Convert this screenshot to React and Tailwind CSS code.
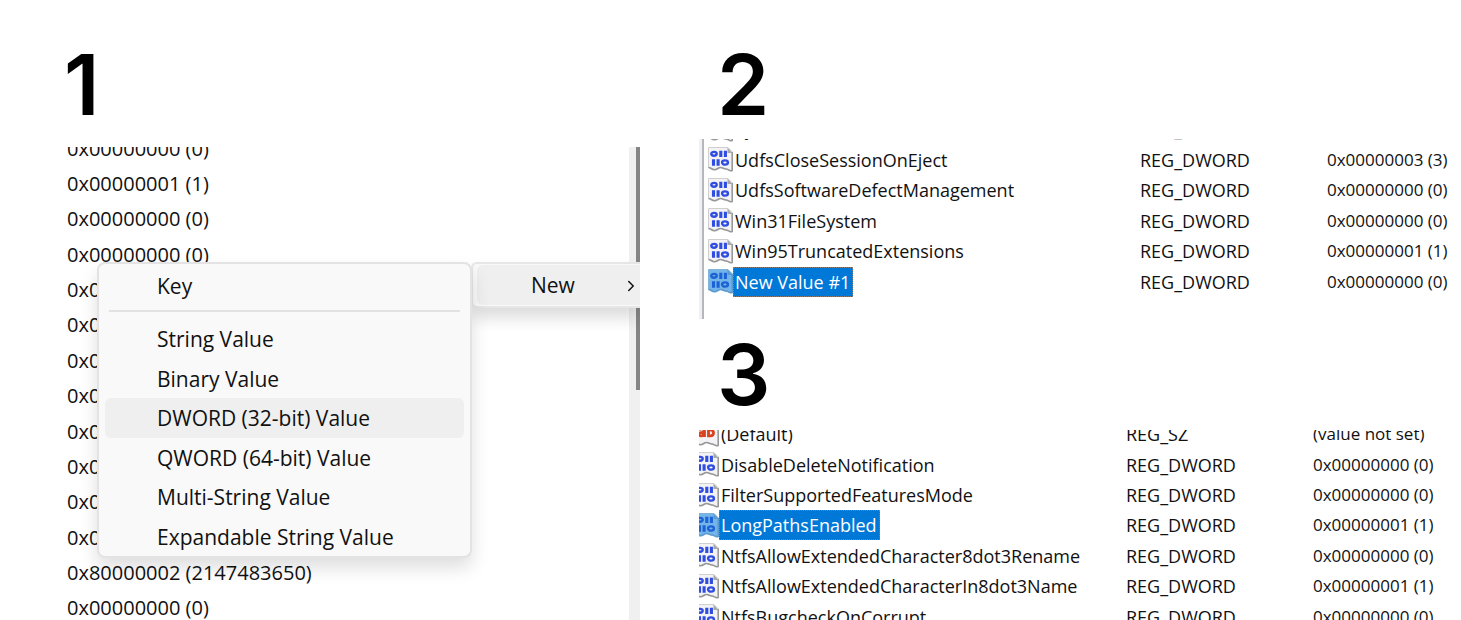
import React from 'react';
import { FiChevronRight } from 'react-icons/fi';
import clsx from 'clsx';

const dataColumn = [
  '0x00000000 (0)',
  '0x00000001 (1)',
  '0x00000000 (0)',
  '0x00000000 (0)',
  '0x00000000 (0)',
  '0x00000000 (0)',
  '0x00000000 (0)',
  '0x00000000 (0)',
  '0x00000000 (0)',
  '0x00000000 (0)',
  '0x00000000 (0)',
  '0x00000000 (0)',
  '0x80000002 (2147483650)',
  '0x00000000 (0)',
];

const newItems = [
  'String Value',
  'Binary Value',
  'DWORD (32-bit) Value',
  'QWORD (64-bit) Value',
  'Multi-String Value',
  'Expandable String Value',
];

const createdRows = [
  { name: 'SymlinkRemoteToRemoteEvaluation', type: 'REG_DWORD', data: '0x00000000 (0)' },
  { name: 'UdfsCloseSessionOnEject', type: 'REG_DWORD', data: '0x00000003 (3)' },
  { name: 'UdfsSoftwareDefectManagement', type: 'REG_DWORD', data: '0x00000000 (0)' },
  { name: 'Win31FileSystem', type: 'REG_DWORD', data: '0x00000000 (0)' },
  { name: 'Win95TruncatedExtensions', type: 'REG_DWORD', data: '0x00000001 (1)' },
  { name: 'New Value #1', type: 'REG_DWORD', data: '0x00000000 (0)' },
];

const renamedRows = [
  { name: '(Default)', type: 'REG_SZ', data: '(value not set)' },
  { name: 'DisableDeleteNotification', type: 'REG_DWORD', data: '0x00000000 (0)' },
  { name: 'FilterSupportedFeaturesMode', type: 'REG_DWORD', data: '0x00000000 (0)' },
  { name: 'LongPathsEnabled', type: 'REG_DWORD', data: '0x00000001 (1)' },
  { name: 'NtfsAllowExtendedCharacter8dot3Rename', type: 'REG_DWORD', data: '0x00000000 (0)' },
  { name: 'NtfsAllowExtendedCharacterIn8dot3Name', type: 'REG_DWORD', data: '0x00000001 (1)' },
  { name: 'NtfsBugcheckOnCorrupt', type: 'REG_DWORD', data: '0x00000000 (0)' },
];

function ValueIcon({ string, selected }) {
  const ink = selected ? '#1a62d6' : '#2f4de0';
  return (
    <svg viewBox="0 0 25 25" className="h-[25px] w-[25px] shrink-0" fill="none" aria-hidden="true">
      {/* sheet with a torn bottom edge and a folded corner */}
      <path
        d="M.5.5H20L24.500 5v18.500c-3 1-4-1.500-6.500-1.500s-3-1.500-5.500-1.500-3 2.200-6 2.200S3 20.500.5 20.500Z"
        fill={selected ? '#74b4e8' : '#f3f3f6'}
        stroke={selected ? '#7fb3dc' : '#cfcfcf'}
      />
      <path
        d="M24.200 5v18.500c-3 1-3.700-1.500-6.200-1.500s-3-1.500-5.500-1.500-3 2.200-6 2.200S3 20.500.5 20.500"
        stroke={selected ? '#5b9bd0' : '#989898'}
        strokeWidth="1.600"
      />
      <path d="M19.500.5V6h5Z" fill={selected ? '#5b9bd0' : '#a8a8a8'} />
      {string ? (
        <g stroke="#d9431f" strokeWidth="2.800">
          <path d="M5 7.500c3-1.500 5.500-.5 5.500 2V15M10 10.500c-3-.3-5 .3-5 1.900 0 2.200 4 2 5-.5" />
          <path d="M14.500 5v8.800h2c4 0 4-6 0-6h-2" />
        </g>
      ) : (
        <g stroke={ink}>
          <ellipse cx="6" cy="6.800" rx="2.700" ry="1.900" strokeWidth="2.400" />
          <path d="M12.800 3.700v6.200M17.400 3.700v6.200" strokeWidth="3.100" />
          <path d="M5.500 12.300v6.400M10.100 12.300v6.400" strokeWidth="3.100" />
          <ellipse cx="17" cy="15.500" rx="2.900" ry="2.100" strokeWidth="2.400" />
        </g>
      )}
    </svg>
  );
}

function StepNumber({ children, className }) {
  return (
    <h2 className={clsx("shrink-0 font-['Inter',sans-serif] text-[84px] leading-none font-semibold text-black", className)}>
      {children}
    </h2>
  );
}

function ValueTable({ rows, selected, className }) {
  return (
    <table className={clsx('table-fixed border-collapse text-[18px] leading-6 whitespace-nowrap', className)}>
      <colgroup>
        <col className="w-[436px]" />
        <col className="w-[187px]" />
        <col />
      </colgroup>
      <tbody>
        {rows.map((row) => (
          <tr key={row.name}>
            <td className="p-0">
              <div className="flex items-center pl-1">
                <ValueIcon string={row.type === 'REG_SZ'} selected={row.name === selected} />
                <span
                  className={clsx(
                    'border border-dotted py-0.5 pr-0.5 pl-px',
                    row.name === selected ? 'border-[#8a7a70] bg-[#0078d7] text-white' : 'border-transparent'
                  )}
                >
                  {row.name}
                </span>
              </div>
            </td>
            <td className="p-0">{row.type}</td>
            <td className="p-0 text-[17px]">{row.data}</td>
          </tr>
        ))}
      </tbody>
    </table>
  );
}

function NewValueMenu() {
  return (
    <>
      {/* parent menu, cut off by the panel edge */}
      <div
        role="menu"
        className="absolute top-[115px] right-0 left-[471px] rounded-l-md border-2 border-r-0 border-[#e6e6e6] bg-[#f9f9f9] py-px pl-1 shadow-[0_10px_16px_rgba(0,0,0,0.14)]"
      >
        <button
          type="button"
          role="menuitem"
          className="flex h-10 w-full items-center justify-between rounded-l-md bg-[#efefef] pt-0.5 pl-[54px]"
        >
          New
          <FiChevronRight className="h-[18px] w-[18px]" />
        </button>
      </div>

      <div
        role="menu"
        className="absolute top-[115px] left-[97px] w-[375px] rounded-lg border-2 border-[#e3e3e3] bg-[#f9f9f9] px-1.5 pt-1 shadow-[0_10px_18px_rgba(0,0,0,0.13)]"
      >
        <button type="button" role="menuitem" className="flex h-[38px] w-full items-center pl-[52px]">
          Key
        </button>
        <hr className="mx-1 mt-1 mb-[7px] border-t-2 border-[#e2e2e2]" />
        <div className="flex h-[237px] flex-col">
          {newItems.map((item) => (
            <button
              key={item}
              type="button"
              role="menuitem"
              className={clsx(
                'flex w-full flex-1 items-center rounded-md pt-0.5 pl-[52px]',
                item.startsWith('DWORD') && 'bg-[#efefef]'
              )}
            >
              {item}
            </button>
          ))}
        </div>
      </div>
    </>
  );
}

export default function App() {
  return (
    <main className="grid h-screen grid-cols-[640fr_762fr] gap-[59px] overflow-hidden bg-white font-['Open_Sans','Noto_Sans',sans-serif] text-[#111111]">
      <section className="flex min-h-0 min-w-0 flex-col">
        <StepNumber className="h-[147px] pt-[43px] pl-16">1</StepNumber>
        <div className="relative min-h-0 flex-1 overflow-hidden text-[21px]">
          <ul className="-mt-4 flex h-[495px] flex-col pl-[67px] text-[20px]">
            {dataColumn.map((value, i) => (
              <li key={i} className="flex flex-1 items-center">
                {value}
              </li>
            ))}
          </ul>
          <div className="absolute inset-y-0 right-0 w-[11px] bg-[#f0f0f0]">
            <div className="ml-auto h-[243px] w-[4px] bg-[#858585]" />
          </div>
          <NewValueMenu />
        </div>
      </section>

      <section className="flex min-h-0 min-w-0 flex-col">
        <StepNumber className="h-[139px] pt-[43px] pl-[18px]">2</StepNumber>
        <div className="h-[180px] shrink-0 overflow-hidden border-l-3 border-[#f0f0f0]">
          <div className="h-full overflow-hidden border-l-2 border-[#b4b8bc]">
            <ValueTable rows={createdRows} selected="New Value #1" className="-mt-[25px] h-[183px] w-full" />
          </div>
        </div>
        <StepNumber className="h-[111px] pt-3.5 pl-[18px]">3</StepNumber>
        <div className="min-h-0 flex-1 overflow-hidden">
          <ValueTable rows={renamedRows} selected="LongPathsEnabled" className="-mt-[11px] -ml-[9px] h-[213px] w-full" />
        </div>
      </section>
    </main>
  );
}
